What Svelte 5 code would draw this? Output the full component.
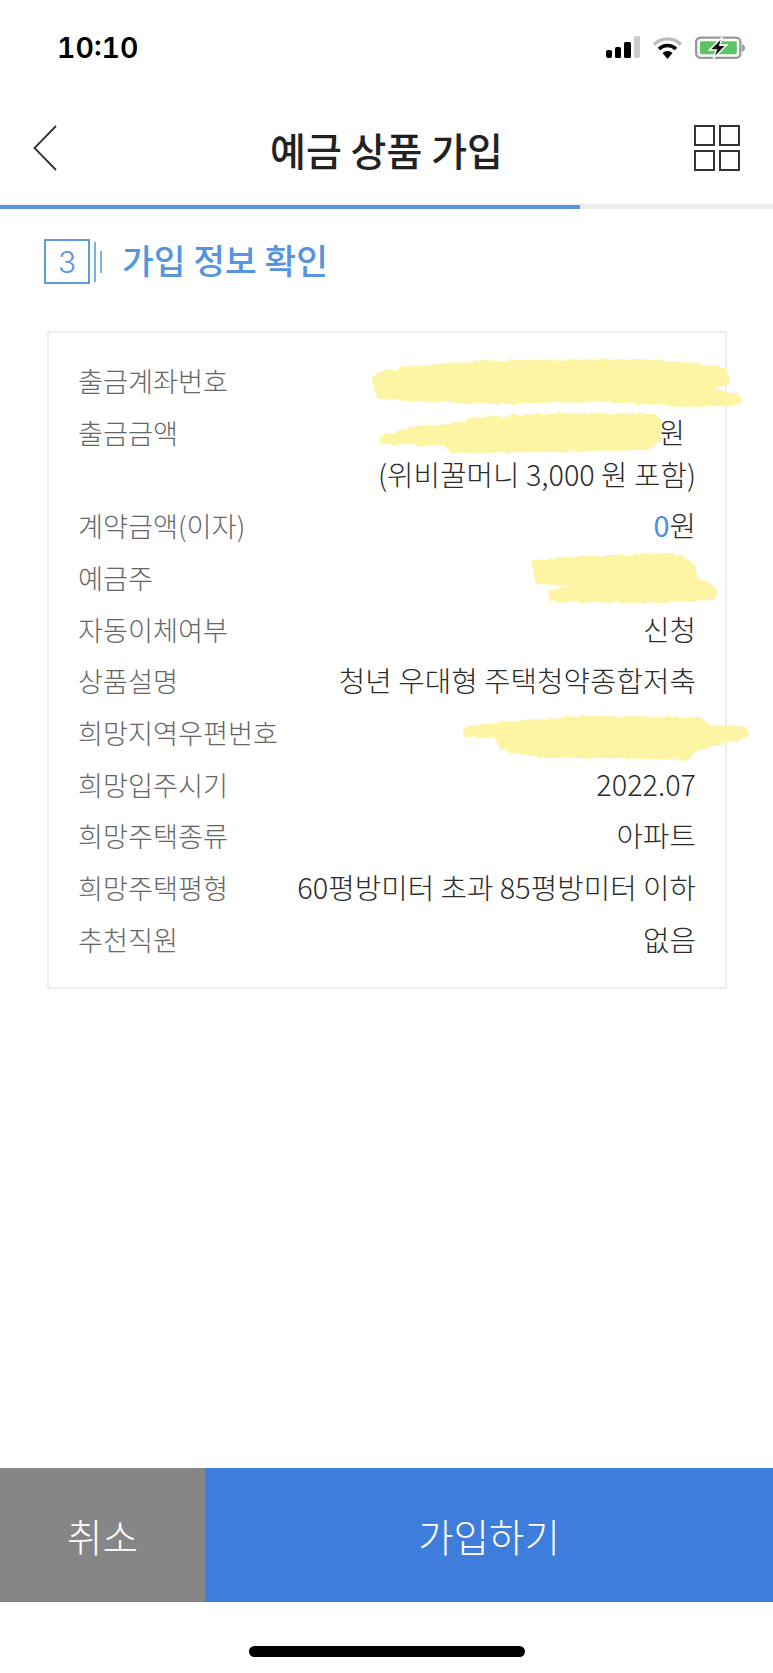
<script>
  const rows = [
    { label: '출금계좌번호', lines: [''] },
    { label: '출금금액', lines: ['원', '(위비꿀머니 3,000 원 포함)'], amount: true },
    { label: '계약금액(이자)', zero: true },
    { label: '예금주', lines: [''] },
    { label: '자동이체여부', lines: ['신청'] },
    { label: '상품설명', lines: ['청년 우대형 주택청약종합저축'] },
    { label: '희망지역우편번호', lines: [''] },
    { label: '희망입주시기', lines: ['2022.07'] },
    { label: '희망주택종류', lines: ['아파트'] },
    { label: '희망주택평형', lines: ['60평방미터 초과 85평방미터 이하'] },
    { label: '추천직원', lines: ['없음'] }
  ];

  // 개인정보 가린 형광펜 자국
  const scribbles = [
    'M372 378 Q380 370 410 367 Q470 360 520 360 L640 359 Q700 362 725 368 Q731 376 729 385 L710 388 Q725 392 738 393 Q743 399 740 405 L700 407 L600 402 L500 404 L420 402 L378 398 Q372 388 372 378Z',
    'M379 437 L410 427 L440 425 L480 417 L560 413 L655 414 Q662 418 662 425 L660 440 L648 450 L560 452 L450 453 L445 446 L400 444 L382 445 Q377 441 379 437Z',
    'M532 560 L590 556 L670 553 L682 556 L695 565 L698 578 L712 584 L719 592 L712 600 L660 603 L550 602 L548 590 L570 586 L536 584 Q532 570 532 560Z',
    'M462 727 L500 722 L580 716 L700 717 L710 725 L744 726 Q751 732 748 738 L700 749 L688 760 L620 758 L540 758 L500 750 L495 738 L465 737 Q461 732 462 727Z'
  ];
</script>

<div class="page">
  <header class="status">
    <span class="time">10:10</span>
    <div class="status-icons">
      <svg width="34" height="24" viewBox="0 0 34 24">
        <rect x="0" y="14" width="6" height="8" rx="2" fill="#000" />
        <rect x="9" y="11" width="6" height="11" rx="1.5" fill="#000" />
        <rect x="18" y="6" width="7" height="16" rx="1.5" fill="#000" />
        <rect x="28" y="0" width="6" height="22" rx="1.5" fill="#ccc" />
      </svg>
      <svg width="31" height="24" viewBox="0 0 31 24">
        <path d="M2 8.5 A19 19 0 0 1 29 8.5" fill="none" stroke="#bbb" stroke-width="3.4" />
        <path d="M7 13 A12 12 0 0 1 24 13" fill="none" stroke="#000" stroke-width="3.4" />
        <path d="M10.5 17 L15.5 23 L20.5 17 A7.5 7.5 0 0 0 10.5 17Z" fill="#000" />
      </svg>
      <svg width="50" height="24" viewBox="0 0 52 24">
        <rect x="1.2" y="1.2" width="46" height="21" rx="4.5" fill="#fff" stroke="#999" stroke-width="2.4" />
        <rect x="5" y="5" width="38.5" height="13.5" rx="1.5" fill="#5cc465" />
        <path d="M49 8 Q52 9 52 12 Q52 15 49 16Z" fill="#999" />
        <path d="M28 1 L15 14 L22 14 L19 23 L33 9 L26 9Z" fill="#111" stroke="#fff" stroke-width="1.6" />
      </svg>
    </div>
  </header>

  <nav class="nav">
    <svg class="back" width="24" height="46" viewBox="0 0 24 46">
      <path d="M23 1 L1.5 23 L23 45" fill="none" stroke="#333" stroke-width="1.8" />
    </svg>
    <h1>예금 상품 가입</h1>
    <svg class="menu" width="46" height="46" viewBox="0 0 46 46">
      <g fill="none" stroke="#333" stroke-width="2">
        <rect x="1" y="1" width="19" height="19" />
        <rect x="26" y="1" width="19" height="19" />
        <rect x="1" y="26" width="19" height="19" />
        <rect x="26" y="26" width="19" height="19" />
      </g>
    </svg>
  </nav>

  <div class="progress"><div class="progress-fill"></div></div>

  <div class="step">
    <span class="step-num">3</span>
    <span class="step-line long"></span>
    <span class="step-line short"></span>
    <h2>가입 정보 확인</h2>
  </div>

  <section class="card">
    {#each rows as row}
      <div class="row">
        <span class="label">{row.label}</span>
        <div class="value">
          {#if row.zero}
            <div><span class="zero">0</span>원</div>
          {:else}
            {#each row.lines as line, i}
              <div class:amount={row.amount && i === 0}>{line || '\u00a0'}</div>
            {/each}
          {/if}
        </div>
      </div>
    {/each}
  </section>

  <div class="spacer"></div>

  <footer class="actions">
    <button class="cancel">취소</button>
    <button class="submit">가입하기</button>
  </footer>

  <div class="home-wrap"><div class="home"></div></div>

  <svg class="scribbles" width="773" height="1673" viewBox="0 0 773 1673">
    <defs>
      <filter id="rough" x="-5%" y="-20%" width="110%" height="140%">
        <feTurbulence type="fractalNoise" baseFrequency="0.12 0.2" numOctaves="2" seed="4" />
        <feDisplacementMap in="SourceGraphic" scale="5" />
      </filter>
    </defs>
    <g filter="url(#rough)">
      {#each scribbles as d}
        <path {d} fill="#fdf5a3" />
      {/each}
    </g>
  </svg>
</div>

<style>
  :global(body) {
    margin: 0;
    background: #fff;
  }
  .page {
    position: relative;
    display: flex;
    flex-direction: column;
    width: 773px;
    height: 1673px;
    overflow: hidden;
    background: #fff;
    font-family: "Noto Sans CJK KR", "Noto Sans", sans-serif;
    color: #333;
  }
  .status {
    display: flex;
    align-items: center;
    justify-content: space-between;
    height: 95px;
    padding: 0 28px 0 57px;
    box-sizing: border-box;
  }
  .time {
    font-family: Inter, "Liberation Sans", sans-serif;
    font-size: 28.5px;
    font-weight: 600;
    font-variant-numeric: tabular-nums;
    color: #000;
  }
  .status-icons {
    display: flex;
    align-items: center;
    gap: 12px;
  }
  .nav {
    display: flex;
    align-items: center;
    justify-content: space-between;
    height: 106px;
    margin-bottom: 3px;
    padding: 0 33px;
    box-sizing: border-box;
    position: relative;
  }
  .nav h1 {
    position: absolute;
    left: 0;
    right: 0;
    margin: 2px 0 0;
    text-align: center;
    font-size: 39px;
    font-weight: 500;
    color: #222;
  }
  .progress {
    display: flex;
    align-items: flex-end;
    height: 5px;
    background: #eee;
  }
  .progress-fill {
    width: 580px;
    height: 4px;
    background: #5b93e2;
  }
  .step {
    display: flex;
    align-items: center;
    margin: 30px 0 0 44px;
    color: #5595e0;
  }
  .step-num {
    display: flex;
    align-items: center;
    justify-content: center;
    width: 46px;
    height: 45px;
    box-sizing: border-box;
    border: 2px solid #5f9ade;
    font-family: Inter, sans-serif;
    font-size: 30px;
    font-weight: 300;
  }
  .step-line {
    width: 2px;
    margin-left: 4px;
    background: #7fb0e6;
  }
  .step-line.long {
    height: 40px;
  }
  .step-line.short {
    height: 22px;
  }
  .step h2 {
    margin: -5px 0 0 20px;
    font-size: 34.5px;
    font-weight: 500;
    line-height: 45px;
    white-space: nowrap;
  }
  .card {
    margin: 47px 46px 0 47px;
    padding: 21px 29px 22px;
    border: 2px solid #eee;
  }
  .row {
    display: flex;
    justify-content: space-between;
    padding: 4.85px 0;
    line-height: 42px;
    white-space: nowrap;
  }
  .label {
    font-size: 27.2px;
    font-weight: 300;
    color: #666;
  }
  .value {
    text-align: right;
    font-size: 28.8px;
    font-weight: 300;
    color: #2b2b2b;
  }
  .amount {
    margin-right: 11px;
  }
  .zero {
    font-weight: 400;
    color: #4a8fe0;
  }
  .spacer {
    flex: 1;
  }
  .actions {
    display: flex;
    height: 134px;
  }
  .actions button {
    border: 0;
    padding: 0;
    color: #fff;
    font-family: inherit;
    font-size: 38.5px;
    font-weight: 300;
  }
  .cancel {
    width: 205px;
    background: #868686;
  }
  .submit {
    flex: 1;
    background: #3e7ddb;
  }
  .home-wrap {
    display: flex;
    justify-content: center;
    height: 71px;
    padding-top: 44px;
    box-sizing: border-box;
  }
  .home {
    width: 276px;
    height: 11px;
    border-radius: 6px;
    background: #000;
  }
  .scribbles {
    position: absolute;
    top: 0;
    left: 0;
    pointer-events: none;
  }
</style>
